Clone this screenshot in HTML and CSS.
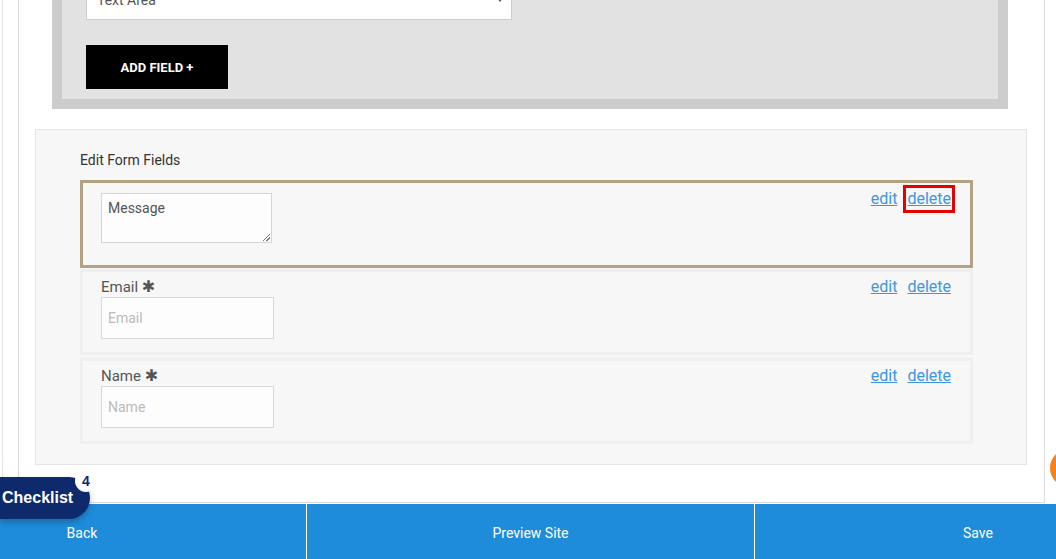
FILE: index.html
```html
<!DOCTYPE html>
<html>
<head>
<meta charset="utf-8">
<link rel="stylesheet" href="styles.css">
</head>
<body>
<div class="app">
  <div class="main">
    <div class="frame">
      <div class="container">
        <div class="add-panel">
          <div class="select-box"><span class="select-text">Text Area</span><span class="caret"></span></div>
          <button class="add-btn">ADD FIELD +</button>
        </div>
        <div class="edit-section">
          <div class="edit-title">Edit Form Fields</div>
          <div class="field-item selected">
            <div class="field-left">
              <div class="textarea-box">Message<span class="grip"></span></div>
            </div>
            <div class="links"><a class="lnk">edit</a><a class="lnk boxed">delete</a></div>
          </div>
          <div class="field-item">
            <div class="field-left">
              <div class="label">Email <span class="star">✱</span></div>
              <div class="input-box">Email</div>
            </div>
            <div class="links"><a class="lnk">edit</a><a class="lnk">delete</a></div>
          </div>
          <div class="field-item">
            <div class="field-left">
              <div class="label">Name <span class="star">✱</span></div>
              <div class="input-box">Name</div>
            </div>
            <div class="links"><a class="lnk">edit</a><a class="lnk">delete</a></div>
          </div>
        </div>
      </div>
    </div>
  </div>
  <div class="footer">
    <div class="fbtn back">Back</div>
    <div class="fbtn preview">Preview Site</div>
    <div class="fbtn save">Save</div>
  </div>
</div>
<div class="checklist">Checklist<span class="count">4</span></div>
<div class="orange-dot"></div>
</body>
</html>
```

FILE: styles.css
```css
html, body {
  margin: 0;
  padding: 0;
  background: #fff;
  overflow: hidden;
}
body {
  font-family: Roboto, "Liberation Sans", sans-serif;
  width: 1056px;
  height: 559px;
  position: relative;
}
.app {
  display: flex;
  flex-direction: column;
  height: 559px;
}
.main {
  flex: 1;
  overflow: hidden;
}
.frame {
  margin-left: 2px;
  border-left: 1px solid #e3e3e3;
  padding-left: 15px;
  height: 100%;
  box-sizing: border-box;
}
.container {
  width: 1027px;
  box-sizing: border-box;
  height: 503px;
  border-left: 1px solid #dcdcdc;
  border-right: 1px solid #dcdcdc;
  border-bottom: 1px solid #dcdcdc;
  overflow: hidden;
}
.add-panel {
  margin-left: 33px;
  margin-top: -20px;
  width: 956px;
  box-sizing: border-box;
  background: #e2e2e2;
  border: 10px solid #cccccc;
  border-top: 0;
  padding: 0 0 10px 24px;
  box-shadow: inset 0 20px 3px -18px rgba(0,0,0,0.12);
}
.select-box {
  width: 426px;
  height: 40px;
  box-sizing: border-box;
  background: #fff;
  border: 1px solid #cccccc;
  display: flex;
  align-items: center;
  justify-content: space-between;
  padding: 0 8px 0 10px;
  color: #555;
  font-size: 14px;
}
.caret {
  width: 0;
  height: 0;
  border-left: 3px solid transparent;
  border-right: 3px solid transparent;
  border-top: 4px solid #555;
}
.add-btn {
  display: block;
  margin-top: 25px;
  width: 142px;
  height: 44px;
  background: #000;
  color: #fff;
  border: 0;
  font-family: Roboto, "Liberation Sans", sans-serif;
  font-weight: 700;
  font-size: 13px;
  padding: 0;
}
.edit-section {
  margin-top: 20px;
  margin-left: 16px;
  width: 992px;
  box-sizing: border-box;
  background: #f7f7f7;
  border: 1px solid #e6e6e6;
  padding: 20px 53px 20px 44px;
}
.edit-title {
  font-size: 14px;
  line-height: 20px;
  color: #333;
  margin-bottom: 10px;
}
.field-item {
  display: flex;
  justify-content: space-between;
  align-items: flex-start;
  border: 3px solid #efefef;
  background: #f7f7f7;
  padding: 5px 15px 13px 18px;
}
.field-item + .field-item {
  margin-top: 3px;
}
.field-item .links {
  margin-top: -4px;
}
.field-item.selected {
  border-color: #b2a281;
  padding: 0 15px 22px 18px;
}
.field-item.selected + .field-item {
  margin-top: 1px;
}
.field-item.selected .links {
  margin-top: 2px;
}
.field-item.selected .field-left {
  padding-top: 10px;
}
.textarea-box {
  position: relative;
  width: 171px;
  height: 50px;
  box-sizing: border-box;
  background: #fdfdfd;
  border: 1px solid #d5d5d5;
  padding: 4px 6px;
  font-size: 14px;
  line-height: 20px;
  color: #555;
}
.grip {
  position: absolute;
  right: 1px;
  bottom: 1px;
  width: 7px;
  height: 7px;
  background: linear-gradient(135deg, transparent 45%, #777 45%, #777 55%, transparent 55%, transparent 70%, #777 70%, #777 80%, transparent 80%);
}
.label {
  font-size: 15px;
  line-height: 20px;
  color: #555;
}
.star {
  font-size: 16px;
  color: #555;
  font-family: "DejaVu Sans", sans-serif;
  font-weight: bold;
}
.input-box {
  width: 173px;
  height: 42px;
  box-sizing: border-box;
  background: #fdfdfd;
  border: 1px solid #d8d8d8;
  padding: 0 6px;
  display: flex;
  align-items: center;
  font-size: 14px;
  color: #bbb;
}
.links {
  display: flex;
}
.lnk {
  display: inline-block;
  padding: 1px;
  margin-left: 2px;
  border: 3px solid transparent;
  font-size: 16px;
  line-height: 20px;
  color: #3d96df;
  text-decoration: underline;
}
.lnk.boxed {
  border-color: #e80000;
}
.footer {
  margin-top: 1px;
  height: 55px;
  display: grid;
  grid-template-columns: 306px 447px 1fr;
  column-gap: 1px;
  background: #fff;
}
.fbtn {
  background: #1f8cd9;
  color: #fff;
  font-size: 14px;
  display: flex;
  align-items: center;
  justify-content: center;
  padding-top: 2px;
}
.fbtn.back {
  padding-right: 142px;
}
.fbtn.save {
  padding-left: 145px;
}
.checklist {
  position: absolute;
  left: 0;
  top: 477px;
  width: 90px;
  height: 42px;
  box-sizing: border-box;
  background: #0e2a6c;
  border-radius: 0 21px 21px 0;
  color: #fff;
  font-family: "Liberation Sans", Arial, sans-serif;
  font-weight: 700;
  font-size: 16px;
  line-height: 42px;
  padding-left: 2px;
  box-shadow: 0 3px 6px rgba(0,0,0,0.25);
}
.count {
  position: absolute;
  left: 75px;
  top: -7px;
  width: 22px;
  height: 22px;
  border-radius: 50%;
  background: #fff;
  color: #0e2a6c;
  font-size: 14px;
  font-weight: 700;
  line-height: 22px;
  text-align: center;
}
.orange-dot {
  position: absolute;
  left: 1050px;
  top: 449px;
  width: 38px;
  height: 38px;
  border-radius: 50%;
  background: #f7821b;
}
```
